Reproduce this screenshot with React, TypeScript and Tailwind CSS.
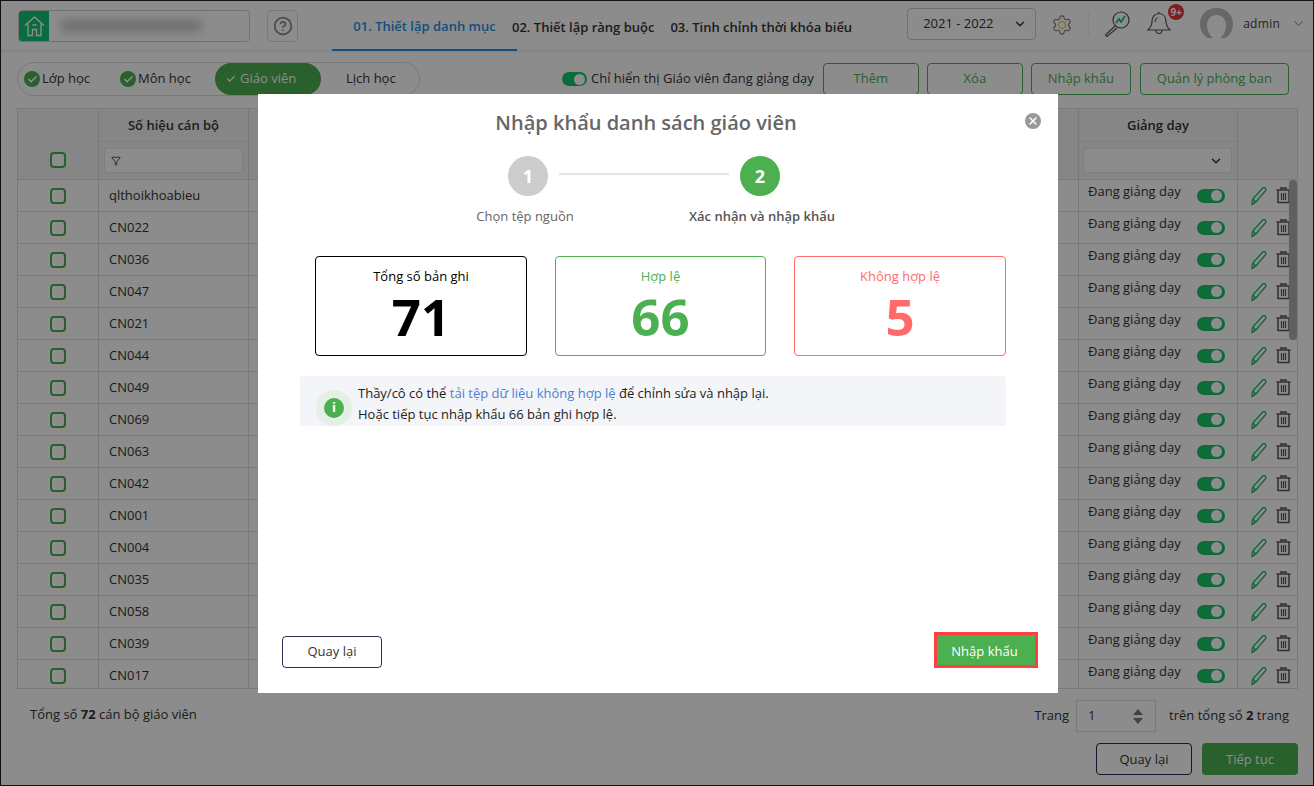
import React from "react";
import { Check, ChevronDown, X, Filter, Settings, HelpCircle } from "lucide-react";

const ROWS = [
	"qlthoikhoabieu",
	"CN022",
	"CN036",
	"CN047",
	"CN021",
	"CN044",
	"CN049",
	"CN069",
	"CN063",
	"CN042",
	"CN001",
	"CN004",
	"CN035",
	"CN058",
	"CN039",
	"CN017",
];

const Toggle = () => (
	<span className="flex h-[14px] w-[28px] items-center justify-end rounded-full bg-[#18c46b] px-[3px]">
		<span className="h-[11px] w-[11px] rounded-full bg-white" />
	</span>
);

const Box = () => (
	<span className="block h-4 w-4 rounded-[4px] border-2 border-[#4caf50] bg-white" />
);

const PencilIcon = () => (
	<svg width="18" height="20" viewBox="0 0 18 20" fill="none" stroke="#2bc06f" strokeWidth="1.5" strokeLinejoin="round">
		<path d="M2 18.500 2.800 13 12.500 2.300c.8-.9 2-.9 2.800-.1.8.8.8 2 0 2.800L5.800 16 2 18.500Z" />
		<path d="M2.800 13 5.800 16" />
	</svg>
);

const TrashIcon = () => (
	<svg width="15" height="17" viewBox="0 0 15 17" fill="none" stroke="#5a5a5a" strokeWidth="1.500">
		<path d="M0.500 3h14" />
		<path d="M5 3V1h5v2" />
		<path d="M2 3v12.500h11V3" />
		<path d="M5.500 6v7M7.500 6v7M9.500 6v7" strokeWidth="1.200" />
	</svg>
);

const StatCard = ({
	label,
	value,
	className,
}: {
	label: string;
	value: string;
	className: string;
}) => (
	<div className={`flex h-[100px] flex-col items-center rounded-[4px] border pt-[10px] ${className}`}>
		<span className="text-[13px] leading-[18px]">{label}</span>
		<span className="mt-[6px] text-[51px] leading-[50px] font-bold">{value}</span>
	</div>
);

const Background = () => (
	<div className="flex h-[786px] w-[1314px] flex-col border border-[#222] bg-white text-[13px] text-[#333]">
		{/* Header */}
		<header className="flex h-[50px] shrink-0 items-center border-b border-[#eeeeee] pl-[17px] shadow-[0_1px_3px_rgba(0,0,0,0.06)]">
			<div className="flex h-[32px] w-[232px] overflow-hidden rounded-[4px] border border-[#ccc]">
				<span className="flex w-[30px] items-center justify-center bg-[#12c374] text-white">
					<svg width="21" height="22" viewBox="0 0 21 22" fill="none" stroke="currentColor" strokeWidth="1.4">
						<path d="M1 10.500 10.500 2 20 10.500" />
						<path d="M4 8.500V20.500h4.500v-6h4v6H17V8.500" />
						<path d="M8.500 10h4" />
					</svg>
				</span>
				<span className="mt-[9px] ml-[12px] h-[12px] w-[140px] rounded bg-[#c8c8c8] blur-[5px]" />
			</div>
			<div className="ml-[17px] flex h-[32px] w-[31px] items-center justify-center rounded-[4px] border border-[#ddd] text-[#888]">
				<HelpCircle size={20} />
			</div>
			<nav className="ml-[34px] flex h-full items-center self-stretch text-[13px] font-semibold">
				<span className="flex h-[50px] w-[185px] items-center justify-center border-b-2 border-[#1e8fe8] pt-[4px] text-[#1e8fe8]">
					01. Thiết lập danh mục
				</span>
				<span className="ml-[-5px] pt-[4px] whitespace-nowrap text-[#333]">02. Thiết lập ràng buộc</span>
				<span className="ml-[16px] pt-[4px] whitespace-nowrap text-[#333]">03. Tinh chỉnh thời khóa biểu</span>
			</nav>
			<div className="mb-[3px] ml-[55px] flex h-[32px] w-[129px] items-center justify-between rounded-[4px] border border-[#ccc] pr-[8px] pl-[15px]">
				<span className="text-[13px]">2021 - 2022</span>
				<ChevronDown size={14} strokeWidth={2.5} />
			</div>
			<span className="relative mb-[2px] ml-[15px] flex items-center justify-center">
				<Settings size={22} strokeWidth={1.2} className="text-[#777]" />
				<span className="absolute h-[8px] w-[8px] rounded-full border-[1.5px] border-[#e8c030] bg-white" />
			</span>
			<span className="mb-[3px] ml-[15px] h-[24px] w-px bg-[#eee]" />
			<svg className="mb-[3px] ml-[14px]" width="28" height="28" viewBox="0 0 28 28" fill="none" stroke="#555" strokeWidth="1.2">
				<circle cx="18" cy="10" r="8" />
				<path d="M12 16 2.500 25l1.500 1.500L14 18" />
				<path d="m13 13 3-4 2 3 4-6" stroke="#18c46b" strokeWidth="1.8" />
			</svg>
			<div className="relative mb-[5px] ml-[15px]">
				<svg width="26" height="26" viewBox="0 0 26 26" fill="none" stroke="#555" strokeWidth="1.200">
					<path d="M13 3.500c-4.500 0-7 3.500-7 8 0 4-2 6.500-4 8.500h22c-2-2-4-4.500-4-8.500 0-4.500-2.500-8-7-8Z" />
					<path d="M10 20c0 2 1.300 3.500 3 3.500s3-1.500 3-3.500" />
					<path d="M12.500 3.500c0-1 .2-1.500.8-1.500" />
					<path d="M9 12c0-2 1-3.500 2.500-4.500" stroke="#18c46b" strokeWidth="1.400" />
				</svg>
				<span className="absolute -top-[6px] left-[22px] flex h-[16px] w-[16px] items-center justify-center rounded-full bg-[#e53935] text-[10px] font-bold text-white">
					9+
				</span>
			</div>
			<svg className="mb-[5px] ml-[28px]" width="33" height="30" viewBox="0 0 33 30" fill="#bdbdbd">
				<path d="M16.500 0C7 0 0 6.500 0 16c0 6 3 11 7.500 14H13c-4-3-6-8-6-13 0-6 4-10 9.500-10S26 11 26 17c0 5-2 10-6 13h5.500C30 27 33 22 33 16 33 6.500 26 0 16.500 0Z" />
			</svg>
			<span className="mb-[4px] ml-[10px] text-[12px] tracking-[0.3px] text-[#444]">admin</span>
			<ChevronDown size={15} strokeWidth={1.5} className="mb-[4px] ml-[11px] text-[#777]" />
		</header>

		{/* Toolbar */}
		<div className="flex h-[45px] shrink-0 items-center pt-[11px] pl-[16px]">
			<div className="flex h-[34px] w-[403px] items-center rounded-full border border-[#ddd] text-[13px]">
				<span className="flex w-[96px] items-center pl-[6px]">
					<span className="flex h-4 w-4 items-center justify-center rounded-full bg-[#4caf50] text-white"><Check size={11} strokeWidth={3.5} /></span>
					<span className="ml-[2px]">Lớp học</span>
				</span>
				<span className="flex w-[101px] items-center pl-[6px]">
					<span className="flex h-4 w-4 items-center justify-center rounded-full bg-[#4caf50] text-white"><Check size={11} strokeWidth={3.5} /></span>
					<span className="ml-[2px]">Môn học</span>
				</span>
				<span className="flex h-[32px] w-[106px] items-center rounded-full bg-[#4caf50] pl-[11px] text-white">
					<Check size={10} strokeWidth={3} />
					<span className="ml-[4px]">Giáo viên</span>
				</span>
				<span className="ml-[25px]">Lịch học</span>
			</div>
			<div className="ml-[142px] flex items-center gap-[4px]">
				<span className="flex h-[14px] w-[25px] items-center justify-end rounded-full bg-[#18c46b] px-[2px]">
					<span className="h-[11px] w-[11px] rounded-full bg-white" />
				</span>
				<span className="whitespace-nowrap">Chỉ hiển thị Giáo viên đang giảng dạy</span>
			</div>
			<div className="ml-[9px] flex gap-[8px] text-[#4caf50]">
				<span className="flex h-[32px] w-[96px] items-center justify-center rounded-[4px] border border-[#4caf50]">Thêm</span>
				<span className="flex h-[32px] w-[96px] items-center justify-center rounded-[4px] border border-[#4caf50]">Xóa</span>
				<span className="flex h-[32px] w-[100px] items-center justify-center rounded-[4px] border border-[#4caf50]">Nhập khẩu</span>
				<span className="ml-[1px] flex h-[32px] w-[149px] items-center justify-center rounded-[4px] border border-[#4caf50]">Quản lý phòng ban</span>
			</div>
		</div>

		{/* Table */}
		<div className="relative mt-[12px] ml-[16px] h-[581px] w-[1281px] shrink-0 overflow-hidden border border-[#ddd]">
			<div className="flex h-[71px] border-b border-[#ddd] bg-[#f5f5f5]">
				<div className="flex w-[81px] flex-col items-center justify-end border-r border-[#ddd] pb-[11px]">
					<Box />
				</div>
				<div className="flex w-[150px] flex-col border-r border-[#ddd]">
					<div className="flex h-[33px] items-center justify-center border-b border-[#e5e5e5] pt-[2px] font-semibold">Số hiệu cán bộ</div>
					<div className="flex flex-1 items-center px-[5px]">
						<div className="flex h-[25px] w-[139px] items-center rounded-[3px] border border-[#e5e5e5] bg-white pl-[6px]">
							<Filter size={10} />
						</div>
					</div>
				</div>
				<div className="flex-1" />
				<div className="flex w-[160px] flex-col border-r border-l border-[#ddd]">
					<div className="flex h-[33px] items-center justify-center border-b border-[#e5e5e5] pt-[2px] font-semibold">Giảng dạy</div>
					<div className="flex flex-1 items-center px-[4px]">
						<div className="flex h-[25px] w-[149px] items-center justify-end rounded-[3px] border border-[#e5e5e5] bg-white pr-[8px]">
							<ChevronDown size={14} strokeWidth={2.5} />
						</div>
					</div>
				</div>
				<div className="w-[59px]" />
			</div>
			{ROWS.map((row) => (
				<div key={row} className="flex h-[32px] border-b border-[#ddd]">
					<div className="flex w-[81px] items-center justify-center border-r border-[#ddd]">
						<Box />
					</div>
					<div className="flex w-[150px] items-center border-r border-[#ddd] pl-[10px]">{row}</div>
					<div className="flex-1" />
					<div className="flex w-[160px] items-center justify-between border-r border-l border-[#ddd] pr-[12px] pl-[9px]">
						<span className="mb-[8px]">Đang giảng dạy</span>
						<Toggle />
					</div>
					<div className="flex w-[59px] items-center gap-[8px] pl-[12px]">
						<PencilIcon />
						<TrashIcon />
					</div>
				</div>
			))}
			<div className="absolute top-[71px] right-0 h-[160px] w-[8px] rounded-full bg-[#aeaeae]" />
		</div>

		{/* Footer */}
		<div className="flex h-[54px] shrink-0 items-center justify-between pr-[24px] pl-[29px]">
			<span className="mb-[2px]">Tổng số <b>72</b> cán bộ giáo viên</span>
			<div className="flex items-center">
				<span>Trang</span>
				<div className="ml-[7px] flex h-[32px] w-[80px] items-center justify-between border border-[#ddd] pr-[12px] pl-[11px]">
					1
					<span className="flex flex-col gap-[3px]">
						<span className="h-0 w-0 border-x-[5px] border-b-[6px] border-x-transparent border-b-[#777]" />
						<span className="h-0 w-0 border-x-[5px] border-t-[6px] border-x-transparent border-t-[#777]" />
					</span>
				</div>
				<span className="ml-[13px]">trên tổng số <b>2</b> trang</span>
			</div>
		</div>
		<div className="flex justify-end gap-[10px] pr-[15px]">
			<span className="flex h-[32px] w-[96px] items-center justify-center rounded-[4px] border border-[#2b2d52] pt-[1px]">Quay lại</span>
			<span className="flex h-[32px] w-[96px] items-center justify-center rounded-[4px] bg-[#4caf50] pt-[1px] text-white">Tiếp tục</span>
		</div>
	</div>
);

const Modal = () => (
	<div className="absolute top-[94px] left-[258px] flex h-[599px] w-[800px] flex-col bg-white text-[13px] text-[#333]">
		<button className="absolute top-[19px] right-[17px] flex h-4 w-4 items-center justify-center rounded-full bg-[#999] text-white">
			<X size={12} strokeWidth={3} />
		</button>
		<h2 className="mt-[14px] pr-[24px] text-center text-[20px] leading-[30px] font-semibold text-[#666]">Nhập khẩu danh sách giáo viên</h2>

		{/* Stepper */}
		<div className="mt-[18px] ml-[200px] flex h-[80px] items-start">
			<div className="flex w-[140px] flex-col items-center">
				<span className="flex h-[40px] w-[40px] items-center justify-center rounded-full bg-[#ccc] text-[18px] font-bold text-white">1</span>
				<span className="mt-[11px] mr-[6px] whitespace-nowrap text-[#666]">Chọn tệp nguồn</span>
			</div>
			<span className="mt-[17px] mr-[-44px] ml-[-39px] h-[2px] w-[170px] bg-[#e5e5e5]" />
			<div className="flex w-[150px] flex-col items-center">
				<span className="flex h-[40px] w-[40px] items-center justify-center rounded-full bg-[#4caf50] text-[18px] font-bold text-white">2</span>
				<span className="mt-[11px] ml-[4px] whitespace-nowrap font-semibold text-[#555]">Xác nhận và nhập khẩu</span>
			</div>
		</div>

		{/* Stat cards */}
		<div className="mt-[20px] ml-[57px] flex gap-[28px]">
			<StatCard label="Tổng số bản ghi" value="71" className="w-[212px] border-black text-black" />
			<StatCard label="Hợp lệ" value="66" className="w-[211px] border-[#4caf50] text-[#4caf50]" />
			<StatCard label="Không hợp lệ" value="5" className="w-[212px] border-[#ff6b6b] text-[#ff6b6b]" />
		</div>

		{/* Info */}
		<div className="mt-[20px] ml-[42px] flex h-[50px] w-[706px] overflow-hidden rounded-t-[4px] bg-[#f3f5f9]">
			<span className="mt-[14px] ml-[16px] flex h-[36px] w-[36px] shrink-0 items-center justify-center rounded-full bg-[#e4efe6]">
				<span className="flex h-[20px] w-[20px] items-center justify-center rounded-full bg-[#4caf50] text-[13px] font-bold text-white">i</span>
			</span>
			<div className="ml-[6px] pt-[7px] leading-[21px] text-[#222]">
				<p>Thầy/cô có thể <span className="text-[#4a7fd4]">tải tệp dữ liệu không hợp lệ</span> để chỉnh sửa và nhập lại.</p>
				<p>Hoặc tiếp tục nhập khẩu 66 bản ghi hợp lệ.</p>
			</div>
		</div>

		{/* Actions */}
		<div className="mt-auto mb-[25px] flex items-center justify-between pr-[20px] pl-[24px]">
			<span className="mt-[4px] flex h-[32px] w-[100px] items-center justify-center rounded-[4px] border border-[#2b2d52]">Quay lại</span>
			<span className="flex h-[36px] w-[104px] items-center justify-center border-[3px] border-[#ff4040] bg-[#4caf50] pt-[3px] pr-[3px] font-medium text-white">Nhập khẩu</span>
		</div>
	</div>
);

export default function App() {
	return (
		<div className="relative h-[786px] w-[1314px] overflow-hidden font-['Open_Sans',sans-serif]">
			<Background />
			<div className="absolute inset-0 bg-black/45" />
			<Modal />
		</div>
	);
}
